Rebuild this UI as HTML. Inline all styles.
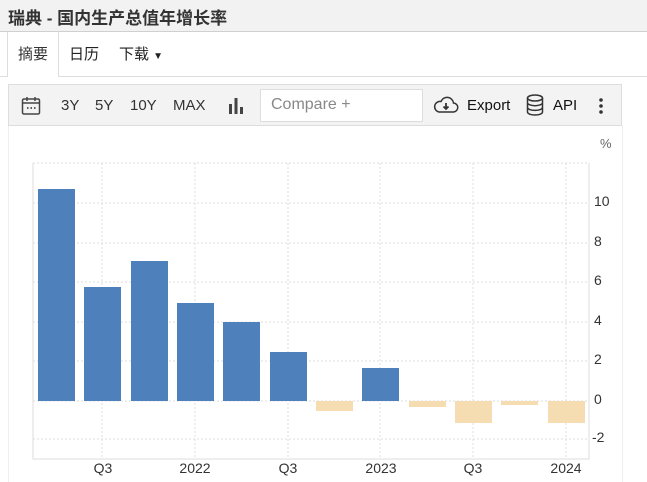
<!DOCTYPE html>
<html><head><meta charset="utf-8"><style>
*{margin:0;padding:0;box-sizing:border-box}
body{width:647px;height:482px;overflow:hidden;background:#fff;font-family:"Liberation Sans","Noto Sans CJK SC",sans-serif;color:#222;position:relative}
.hdr{position:absolute;left:0;top:0;width:647px;height:32px;background:#f2f2f2;border-bottom:1px solid #d0d0d0}
.hdr span{position:absolute;left:8px;top:4px;font-size:17px;font-weight:bold;color:#333}
.tabs{position:absolute;left:0;top:32px;width:647px;height:45px;border-bottom:1px solid #ddd}
.tab{position:absolute;top:11px;font-size:15px}
.sel{position:absolute;left:7px;top:0;width:52px;height:45px;border-left:1px solid #ddd;border-right:1px solid #ddd;background:#fff}
.tb{position:absolute;left:8px;top:84px;width:614px;height:42px;background:#f3f3f3;border:1px solid #ddd}
.tb .t{position:absolute;top:12px;font-size:15px;color:#333}
.cmp{position:absolute;left:251px;top:4px;width:163px;height:33px;background:#fff;border:1px solid #ddd;font-size:16px;color:#888;padding:6px 10px}
.frame{position:absolute;left:8px;top:126px;width:615px;height:356px;border-left:1px solid #eee;border-right:1px solid #eee}
</style></head><body>
<div class="hdr"><span>瑞典 - 国内生产总值年增长率</span></div>
<div class="tabs">
<div class="sel"></div>
<div class="tab" style="left:18px;color:#333">摘要</div>
<div class="tab" style="left:69px">日历</div>
<div class="tab" style="left:119px">下载 <span style="font-size:10px">▼</span></div>
</div>
<div class="tb">
<svg style="position:absolute;left:12px;top:11px" width="20" height="20" viewBox="0 0 20 20" fill="none" stroke="#444" stroke-width="1.5"><rect x="1.5" y="3" width="17" height="15" rx="1.5"/><path d="M1.5 7h17M6 1v4M14 1v4"/><path d="M6 12h1.5M9.5 12h1.5M13 12h1.5" stroke-width="1.8"/></svg>
<span class="t" style="left:52px">3Y</span>
<span class="t" style="left:86px">5Y</span>
<span class="t" style="left:121px">10Y</span>
<span class="t" style="left:164px">MAX</span>
<svg style="position:absolute;left:219px;top:12px" width="16" height="18"><rect x="1" y="7" width="3" height="10" fill="#444"/><rect x="6.5" y="1" width="3" height="16" fill="#444"/><rect x="12" y="10" width="3" height="7" fill="#444"/></svg>
<div class="cmp">Compare +</div>
<svg style="position:absolute;left:424px;top:10px" width="26" height="20" viewBox="0 0 26 20" fill="none" stroke="#333" stroke-width="1.5"><path d="M6 17h14a4.5 4.5 0 0 0 0.5-9A6.5 6.5 0 0 0 8 6.5 5.3 5.3 0 0 0 6 17z"/><path d="M13 8v6M10.5 11.5L13 14l2.5-2.5" stroke-width="1.8"/></svg>
<span class="t" style="left:458px;color:#111">Export</span>
<svg style="position:absolute;left:517px;top:9px" width="18" height="22" viewBox="0 0 18 22" fill="none" stroke="#333" stroke-width="1.5"><ellipse cx="9" cy="4" rx="7.5" ry="3"/><path d="M1.5 4v14c0 1.7 3.4 3 7.5 3s7.5-1.3 7.5-3V4M1.5 8.7c0 1.7 3.4 3 7.5 3s7.5-1.3 7.5-3M1.5 13.4c0 1.7 3.4 3 7.5 3s7.5-1.3 7.5-3"/></svg>
<span class="t" style="left:544px;color:#111">API</span>
<svg style="position:absolute;left:589px;top:12px" width="6" height="18"><circle cx="3" cy="3" r="1.8" fill="#333"/><circle cx="3" cy="9" r="1.8" fill="#333"/><circle cx="3" cy="15" r="1.8" fill="#333"/></svg>
</div>
<div class="frame"></div>
<svg style="position:absolute;left:0;top:0" width="647" height="482" font-family="Liberation Sans, sans-serif" font-size="14" fill="#333">
<text x="600" y="148" font-size="13" fill="#666">%</text>
<g stroke="#ddd" stroke-dasharray="2,2" stroke-width="1">
<path d="M33 163H589M33 203H589M33 243H589M33 282H589M33 322H589M33 361H589M33 401H589M33 439H589"/>
<path d="M102 163V459M195 163V459M288 163V459M380 163V459M473 163V459M566 163V459"/>
</g>
<path d="M33 163V459H589V163" stroke="#ddd" fill="none"/>
<g fill="#4e80bb">
<rect x="38" y="189" width="37" height="212"/>
<rect x="84" y="287" width="37" height="114"/>
<rect x="131" y="261" width="37" height="140"/>
<rect x="177" y="303" width="37" height="98"/>
<rect x="223" y="322" width="37" height="79"/>
<rect x="270" y="352" width="37" height="49"/>
<rect x="362" y="368" width="37" height="33"/>
</g>
<g fill="#f5ddb1">
<rect x="316" y="401" width="37" height="10"/>
<rect x="409" y="401" width="37" height="6"/>
<rect x="455" y="401" width="37" height="22"/>
<rect x="501" y="401" width="37" height="4"/>
<rect x="548" y="401" width="37" height="22"/>
</g>
<g font-size="14">
<text x="594" y="206">10</text><text x="594" y="246">8</text><text x="594" y="285">6</text><text x="594" y="325">4</text><text x="594" y="364">2</text><text x="594" y="404">0</text><text x="592" y="442">-2</text>
</g>
<g text-anchor="middle">
<text x="103" y="473">Q3</text><text x="195" y="473">2022</text><text x="288" y="473">Q3</text><text x="381" y="473">2023</text><text x="473" y="473">Q3</text><text x="566" y="473">2024</text>
</g>
</svg>
</body></html>
